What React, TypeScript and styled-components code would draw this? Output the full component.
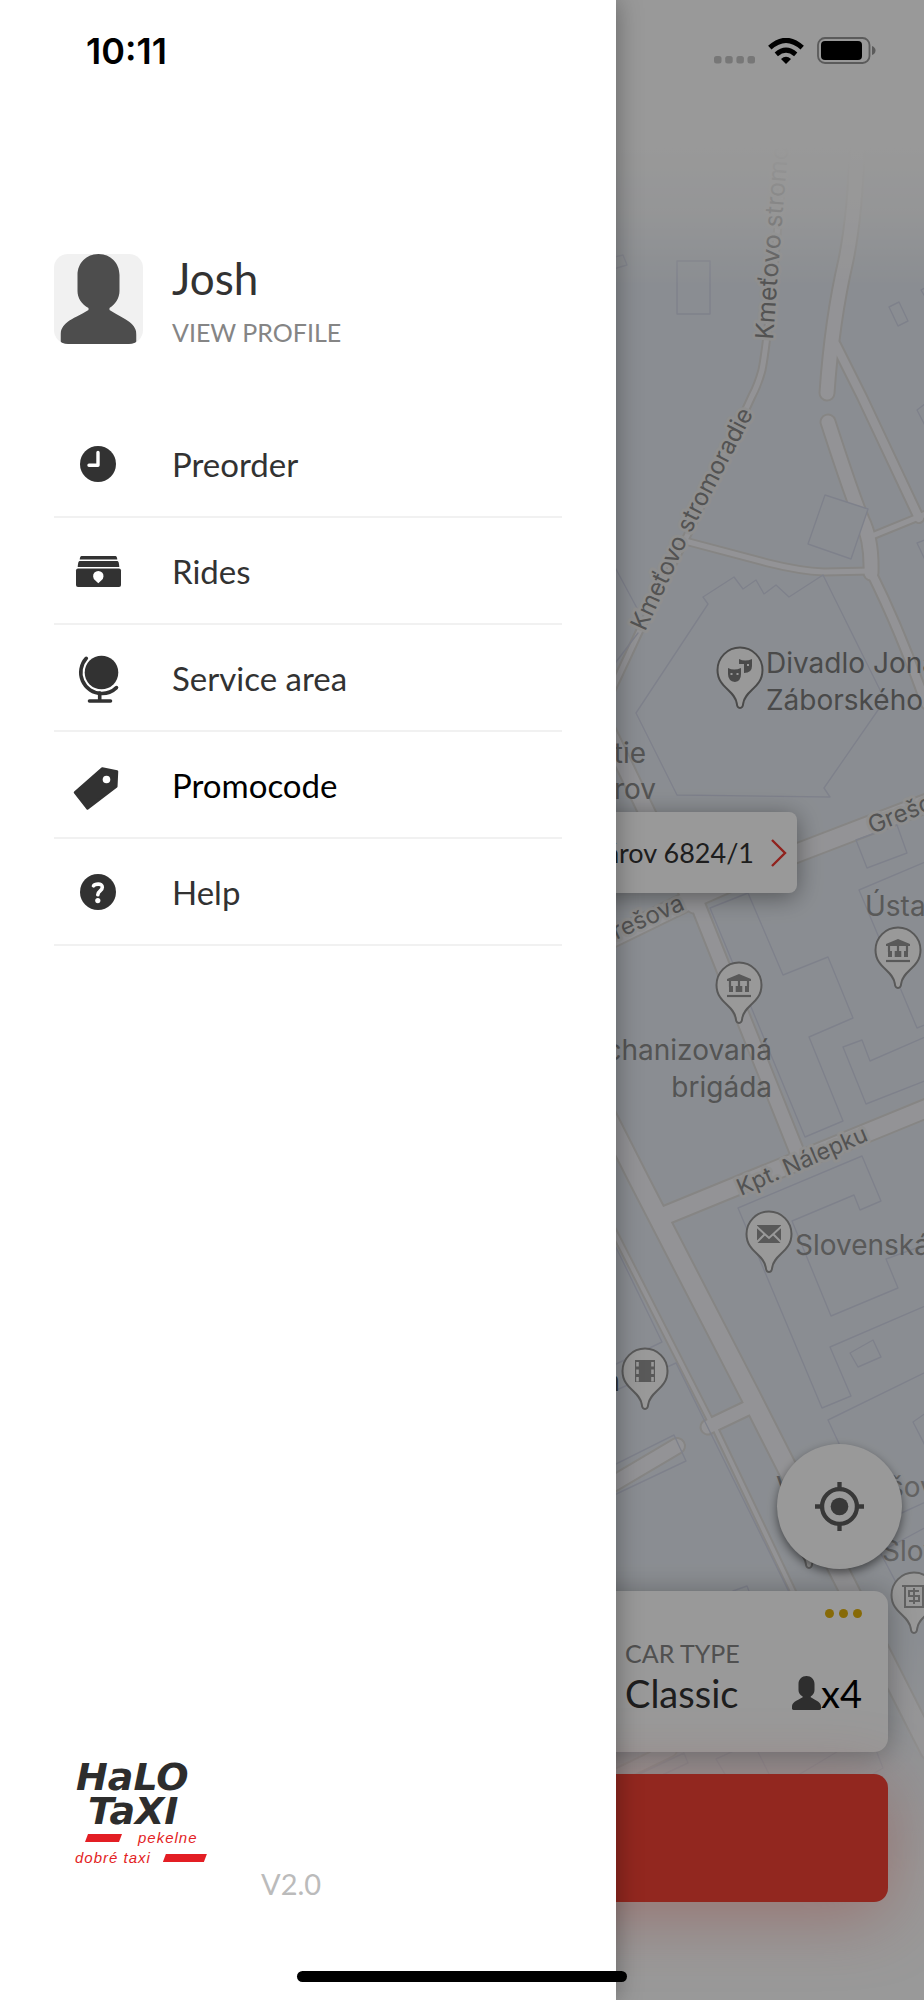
import React from "react";
import styled, { createGlobalStyle } from "styled-components";

const sans = `Lato, "Liberation Sans", sans-serif`;
const system = `Inter, "Liberation Sans", sans-serif`;

const GlobalStyle = createGlobalStyle`
  * { box-sizing: border-box; }
  body { margin: 0; background: #fff; font-family: ${sans}; color: #323232; }
  button { border: 0; padding: 0; font: inherit; color: inherit; cursor: pointer; }
  a { color: inherit; text-decoration: none; }
  p, h1 { margin: 0; }
`;

const Shell = styled.div`
  position: relative;
  display: flex;
  min-height: 100vh;
  overflow: hidden;
`;

/* ---------- booking screen ---------- */

const Booking = styled.main`
  flex: 1;
  display: flex;
  flex-direction: column;
  justify-content: flex-end;
  gap: 22px;
  padding: 0 36px 98px;
`;

const MapCanvas = styled.svg`
  position: absolute;
  inset: 0;
  width: 100%;
  height: 100%;
`;

const Callout = styled.button`
  position: absolute;
  top: calc(50% - 188px);
  left: 127px;
  right: 127px;
  height: 81px;
  padding: 0 10px 0 24px;
  display: flex;
  align-items: center;
  justify-content: flex-end;
  gap: 17px;
  border-radius: 8px;
  background: #fff;
  box-shadow: 0 4px 24px rgba(0, 0, 0, 0.4);
  font-size: 27px;
  line-height: 32px;
`;

const LocateButton = styled.button`
  position: relative;
  align-self: flex-end;
  display: grid;
  place-items: center;
  width: 125px;
  height: 125px;
  margin-right: -14px;
  border-radius: 50%;
  background: #fff;
  box-shadow: 0 4px 10px rgba(0, 0, 0, 0.5);
`;

const RideCard = styled.section`
  position: relative;
  display: flex;
  justify-content: flex-end;
  height: 161px;
  padding: 18px 26px 20px;
  border-radius: 14px;
  background: #fff;
  box-shadow: 0 2px 28px rgba(0, 0, 0, 0.3);
`;

const CarType = styled.div`
  width: 237px;
  display: flex;
  flex-direction: column;
`;

const MoreButton = styled.button`
  align-self: flex-end;
  display: flex;
  gap: 5px;
  background: none;
`;

const MoreDot = styled.i`
  width: 9px;
  height: 9px;
  border-radius: 50%;
  background: #e2b10c;
`;

const CardLabel = styled.p`
  margin-top: 19px;
  font-size: 25px;
  line-height: 32px;
  color: #858585;
`;

const CarRow = styled.div`
  display: flex;
  justify-content: space-between;
  align-items: center;
  font-size: 38px;
  line-height: 48px;
`;

const Seats = styled.span`
  display: flex;
  align-items: center;
  color: #000;
`;

const OrderButton = styled.button`
  position: relative;
  height: 128px;
  border-radius: 14px;
  background: #f34135;
  box-shadow: 0 12px 70px rgba(243, 65, 53, 0.35);
`;

const Scrim = styled.div`
  position: absolute;
  inset: 0;
  background: rgba(0, 0, 0, 0.4);
`;

/* ---------- drawer ---------- */

const Drawer = styled.aside`
  position: absolute;
  top: 0;
  bottom: 0;
  left: 0;
  width: 66.667%;
  display: flex;
  flex-direction: column;
  padding: 254px 54px 98px;
  background: #fff;
  box-shadow: 0 0 24px rgba(0, 0, 0, 0.35);
`;

const Profile = styled.a`
  display: flex;
  gap: 29px;
  height: 90px;
  margin-bottom: 67px;
`;

const Avatar = styled.span`
  width: 89px;
  height: 90px;
  border-radius: 14px;
  background: #f1f1f1;
  overflow: hidden;
`;

const ProfileText = styled.span`
  display: flex;
  flex-direction: column;
`;

const Name = styled.span`
  font-size: 44px;
  line-height: 48px;
`;

const ProfileLink = styled.span`
  margin-top: 14px;
  font-size: 25px;
  line-height: 32px;
  color: #858585;
`;

const MenuItem = styled.a<{ $active?: boolean }>`
  display: flex;
  align-items: center;
  gap: 50px;
  height: 107px;
  padding-left: 20px;
  border-bottom: 2px solid #f1f1f1;
  font-size: 33px;
  line-height: 40px;
  color: ${(p) => (p.$active ? "#000" : "#323232")};
`;

const MenuIcon = styled.svg`
  flex: none;
  width: 48px;
  height: 48px;
  overflow: visible;
  color: #323232;
`;

const DrawerFooter = styled.footer`
  margin-top: auto;
  display: flex;
  align-items: flex-end;
  gap: 47px;
`;

const Brand = styled.div`
  width: 160px;
  padding-bottom: 34px;
  color: #2d2d2d;
`;

const BrandLine = styled.div<{ $indent: number }>`
  padding-left: ${(p) => p.$indent}px;
  font: italic 700 38px/34px "DejaVu Sans", sans-serif;
  white-space: nowrap;
`;

const Tagline = styled.div<{ $indent: number; $gap: number }>`
  display: flex;
  align-items: center;
  gap: ${(p) => p.$gap}px;
  padding-left: ${(p) => p.$indent}px;
  font: italic 15px/20px "Liberation Sans", sans-serif;
  letter-spacing: 1px;
  white-space: nowrap;
  color: #e31e24;
`;

const Stripe = styled.i<{ $width: number }>`
  flex: none;
  width: ${(p) => p.$width}px;
  height: 8px;
  background: #e31e24;
  clip-path: polygon(3px 0, 100% 0, calc(100% - 3px) 100%, 0 100%);
`;

const Version = styled.span`
  font-size: 29px;
  line-height: 36px;
  color: #bbb;
`;

/* ---------- system chrome ---------- */

const StatusBar = styled.header`
  position: absolute;
  top: 0;
  left: 0;
  right: 0;
  display: flex;
  align-items: center;
  justify-content: space-between;
  height: 101px;
  padding: 0 48px 0 86px;
  font: 600 36px/40px ${system};
  color: #000;
`;

const StatusIcons = styled.span`
  display: flex;
  align-items: center;
  gap: 13px;
`;

const HomeIndicator = styled.div`
  position: absolute;
  left: 50%;
  bottom: 18px;
  width: 330px;
  height: 11px;
  border-radius: 6px;
  background: #000;
  transform: translateX(-50%);
`;

/* ---------- drawings ---------- */

const Person = ({ width, height, color }: { width: number; height: number; color: string }) => (
  <svg width={width} height={height} viewBox="0 0 76 90" preserveAspectRatio="none" fill={color} aria-hidden="true">
    <path d="M38 0c12 0 21 9 21 21v16c0 7-4 13-10 17v2c8 5 15 8 20 12 5 4 7 8 7 13v6c0 2-2 3-4 3H4c-2 0-4-1-4-3v-6c0-5 2-9 7-13 5-4 13-7 21-12v-2c-7-4-11-10-11-17V21C17 9 26 0 38 0Z" />
  </svg>
);

const icons = {
  clock: (
    <>
      <circle cx="24" cy="24" r="18" fill="currentColor" />
      <path d="M24 12.500v12.800H15" fill="none" stroke="#fff" strokeWidth="3.400" strokeLinecap="round" strokeLinejoin="round" />
    </>
  ),
  rides: (
    <g fill="currentColor">
      <path d="M7.500 9h34q1.500 0 1.800 3.500h-37.600q.3-3.500 1.800-3.500Z" />
      <path d="M5.500 14h38q1.500 0 1.800 6h-41.600q.3-6 1.800-6Z" />
      <rect x="2" y="21.500" width="45" height="18.500" rx="2" />
      <path d="M24.300 36.200l-3.200-3a5.200 5.200 0 1 1 6.400 0Z" fill="#fff" />
    </g>
  ),
  globe: (
    <>
      <circle cx="27.500" cy="18.500" r="16.800" fill="currentColor" />
      <path d="M12.300 4.300A21 21 0 0 0 27.500 39.500 21 21 0 0 0 42.500 33.600" fill="none" stroke="currentColor" strokeWidth="3.600" strokeLinecap="round" />
      <path d="M25.700 39v8M15.500 47h21" stroke="currentColor" strokeWidth="3.600" strokeLinecap="round" />
    </>
  ),
  tag: (
    <>
      <path d="M28.300 7.500L43 10.500 42.300 25.500 13.500 47.500 1 31.500Z" fill="currentColor" stroke="currentColor" strokeWidth="2.500" strokeLinejoin="round" />
      <circle cx="32.500" cy="18.500" r="3.800" fill="#fff" />
    </>
  ),
  help: (
    <>
      <circle cx="24" cy="24" r="18" fill="currentColor" />
      <path d="M19.500 17.800c1-1.700 8.800-3.200 8.800 1.400 0 3.800-4.300 3.600-4.500 7.600" fill="none" stroke="#fff" strokeWidth="3.600" strokeLinecap="round" />
      <circle cx="23.800" cy="32.600" r="2.600" fill="#fff" />
    </>
  ),
};

const menu: { label: string; icon: keyof typeof icons; active?: boolean }[] = [
  { label: "Preorder", icon: "clock" },
  { label: "Rides", icon: "rides" },
  { label: "Service area", icon: "globe" },
  { label: "Promocode", icon: "tag", active: true },
  { label: "Help", icon: "help" },
];

const roads: [string, number][] = [
  ["M785 150C775 250 770 330 762 370Q758 385 752 396L690 530 640 630 612 690", 5],
  ["M857 150Q855 215 846 260 832 320 827 393", 13],
  ["M828 422Q850 490 862 520 872 540 871 573", 13],
  ["M871 572Q900 630 926 704", 8],
  ["M836 345L862 397 919 518", 8],
  ["M872 536L926 514", 5],
  ["M685 541L768 563Q800 571 824 572L871 571", 5],
  ["M600 715L665 850 694 905", 15],
  ["M696 900L740 1010 797 1152", 13],
  ["M600 944L690 900 797 853 930 802", 17],
  ["M666 1215L930 1107", 17],
  ["M600 1103L639 1180 750 1395 930 1750", 18],
  ["M606 1216L660 1322 712 1424", 4],
  ["M716 1430L797 1600", 4],
  ["M708 1427L752 1406", 13],
  ["M606 1488L677 1446", 14],
  ["M600 1784L670 1750", 12],
];

const buildings = [
  "M825 495L868 509 851 559 808 544Z",
  "M734 577L743 589 756 580 764 594 776 585 789 597 823 575 885 700 824 788 830 797 677 795 636 713 708 604 703 597Z",
  "M610 558L638 610M638 633L610 670",
  "M677 261H710V314H677Z",
  "M889 307L899 302 908 321 898 326Z",
  "M610 258L623 255 627 265 610 270",
  "M930 400L917 410 930 435M930 538L917 543 930 570M930 285L921 290 930 305",
  "M710 908L748 893 783 975 828 957 853 1018 809 1037 843 1121 805 1137Z",
  "M856 840L897 825 907 853 867 868Z",
  "M930 860L859 890 917 1028 930 1023",
  "M930 1035L870 1061 862 1040 843 1047 866 1104 930 1079",
  "M930 1243L886 1259 898 1288 831 1316 792 1221 854 1195 860 1210 881 1201 862 1156 738 1208 822 1408 851 1396 830 1347 930 1304",
  "M850 1353L873 1340 881 1357 858 1367Z",
  "M930 1370L828 1420 842 1450M930 1410L913 1422 930 1455",
  "M610 1235L662 1342 610 1367M610 1393L676 1363 790 1594",
  "M610 1467L674 1435 686 1461 610 1497",
  "M930 1500L895 1516M930 1525L880 1552 900 1590M733 1591L747 1586 750 1594",
  "M635 1776L684 1753 688 1763 660 1776M726 1776L716 1759 740 1748M757 1750L770 1776M800 1774L840 1750M873 1774L883 1768 874 1745",
];

const glyphs: Record<string, React.ReactNode> = {
  masks: (
    <>
      <path d="M-1-11q6 3 13 0v7q0 7-8 7V-6h-5Z" />
      <path d="M-12-2q6 3 13 0v6q0 7-6 8-7-1-7-8Z" />
      <path d="M-9.500 4h2M-3.500 4h2M7-5h2" stroke="#fff" strokeWidth="2" />
    </>
  ),
  museum: (
    <>
      <path d="M0-11L12-6v2H-12v-2Z" />
      <path d="M-9-5V2M0-5V2M9-5V2" stroke="currentColor" strokeWidth="2.200" />
      <path d="M-10 1h4v6h-4ZM-3.300 1h6.600v6h-6.600ZM6 1h4v6h-4Z" />
      <path d="M-12 11H12" stroke="currentColor" strokeWidth="2.200" />
    </>
  ),
  mail: (
    <>
      <path d="M-12-9H12V9H-12Z" />
      <path d="M-13-8L0 4 13-8M-13 9L-4 0M13 9L4 0" fill="none" stroke="#fff" strokeWidth="2" />
    </>
  ),
  film: (
    <>
      <path d="M-10-11H10V11H-10Z" />
      <path d="M-7.500-9V11M7.500-9V11" stroke="#fff" strokeWidth="2.600" strokeDasharray="4.500 3" />
    </>
  ),
  bank: (
    <g fill="none" stroke="currentColor" strokeWidth="2">
      <path d="M-12-9H12M-9-9V12H9V-9" />
      <path d="M5-4H-5V1H5V6H-5M0-7V9" />
    </g>
  ),
  none: null,
};

const pins: [number, number, string, string][] = [
  [740, 670, "masks", "#7c7c7c"],
  [739, 985, "museum", "#949494"],
  [898, 950, "museum", "#949494"],
  [769, 1234, "mail", "#949494"],
  [645, 1371, "film", "#949494"],
  [914, 1595, "bank", "#a4a4a4"],
  [809, 1530, "none", "#a4a4a4"],
];

const places: [number, number, string, string, ("start" | "end")?][] = [
  [646, 763, "tie", "#8c8c8c", "end"],
  [656, 799, "rov", "#8c8c8c", "end"],
  [766, 673, "Divadlo Jonáša", "#7c7c7c"],
  [766, 710, "Záborského", "#7c7c7c"],
  [865, 916, "Ústav", "#949494"],
  [772, 1060, "chanizovaná", "#8c8c8c", "end"],
  [772, 1097, "brigáda", "#8c8c8c", "end"],
  [795, 1255, "Slovenská", "#949494"],
  [882, 1561, "Slovenská", "#a4a4a4"],
  [620, 1391, "a", "#555", "end"],
  [776, 1497, "V", "#949494"],
  [889, 1497, "šov", "#a4a4a4"],
];

const streets: [string, string, string, number][] = [
  ["kmet-upper", "M773 340Q780 240 790 130L794 60", "Kmeťovo stromoradie", 25],
  ["kmet-lower", "M645 632L690 535 776 370", "Kmeťovo stromoradie", 24],
  ["gresova-west", "M600 947L722 893", "Grešova", 24],
  ["gresova-east", "M872 834L1000 783", "Grešova", 24],
  ["nalepku", "M741 1196L920 1118", "Kpt. Nálepku", 23],
];

const CityMap = () => (
  <MapCanvas viewBox="0 0 924 2000" preserveAspectRatio="xMaxYMid slice" role="img" aria-label="Map">
    <defs>
      <linearGradient id="fade-top" x1="0" y1="0" x2="0" y2="1">
        <stop offset="0" stopColor="#fff" />
        <stop offset="0.52" stopColor="#fff" />
        <stop offset="0.75" stopColor="#fff" stopOpacity="0.7" />
        <stop offset="1" stopColor="#fff" stopOpacity="0" />
      </linearGradient>
      <linearGradient id="fade-bottom" x1="0" y1="0" x2="0" y2="1">
        <stop offset="0" stopColor="#fff" stopOpacity="0" />
        <stop offset="0.65" stopColor="#fff" />
      </linearGradient>
      {streets.map(([id, d]) => (
        <path key={id} id={id} d={d} />
      ))}
    </defs>
    <rect width="924" height="2000" fill="#e7ecf3" />
    <g fill="none" strokeLinejoin="round" strokeLinecap="round">
      {roads.map(([d, w]) => (
        <path key={d} d={d} stroke="#dfdedc" strokeWidth={w + 4} />
      ))}
      {roads.map(([d, w]) => (
        <path key={d} d={d} stroke="#f6f6fa" strokeWidth={w} />
      ))}
      {buildings.map((d, i) => (
        <path key={d} d={d} fill={i === 0 ? "#e7ecf3" : "none"} stroke="#d3d7e8" strokeWidth="1.400" />
      ))}
    </g>
    <g fontFamily={system} fill="#8a8a8a" stroke="#eeeeee" strokeWidth="6" strokeLinejoin="round" paintOrder="stroke">
      {streets.map(([id, , name, size]) => (
        <text key={id} fontSize={size}>
          <textPath href={`#${id}`}>{name}</textPath>
        </text>
      ))}
    </g>
    <g fontFamily={system} fontSize="28">
      {places.map(([x, y, name, color, anchor]) => (
        <text key={`${x}-${y}`} x={x} y={y} fill={color} textAnchor={anchor ?? "start"}>
          {name}
        </text>
      ))}
    </g>
    {pins.map(([x, y, glyph, color]) => (
      <g key={`${x}-${y}`} transform={`translate(${x} ${y})`} color={color} fill="currentColor">
        <path
          d="M0 38c-2.500 0-3-2-3.200-4.500C-5 20-22.500 18-22.500 0a22.500 22.500 0 0 1 45 0C22.500 18 5 20 3.200 33.500 3 36 2.500 38 0 38Z"
          fill="#fff"
          stroke="currentColor"
          strokeWidth="2"
        />
        {glyphs[glyph]}
      </g>
    ))}
    <rect width="924" height="285" fill="url(#fade-top)" />
    <rect y="1640" width="924" height="360" fill="url(#fade-bottom)" />
  </MapCanvas>
);

export default function App() {
  return (
    <Shell>
      <GlobalStyle />
      <Booking>
        <CityMap />
        <Callout>
          árov 6824/1
          <svg width="16" height="28" viewBox="0 0 16 28" fill="none" stroke="#f03a32" strokeWidth="2.400" aria-hidden="true">
            <path d="M1 1L14 14 1 27" />
          </svg>
        </Callout>
        <LocateButton aria-label="My location">
          <svg width="49" height="49" viewBox="0 0 50 50" fill="none" stroke="#5e5e5e" strokeWidth="4.400" aria-hidden="true">
            <circle cx="25" cy="25" r="17.800" />
            <circle cx="25" cy="25" r="9" fill="#5e5e5e" stroke="none" />
            <path d="M25 0v8M25 42v8M0 25h8M42 25h8" />
          </svg>
        </LocateButton>
        <RideCard>
          <CarType>
            <MoreButton aria-label="More car types">
              <MoreDot />
              <MoreDot />
              <MoreDot />
            </MoreButton>
            <CardLabel>CAR TYPE</CardLabel>
            <CarRow>
              Classic
              <Seats>
                <Person width={29} height={34} color="#4e4e4e" />
                x4
              </Seats>
            </CarRow>
          </CarType>
        </RideCard>
        <OrderButton aria-label="Order" />
      </Booking>
      <Scrim />
      <Drawer>
        <Profile href="#profile">
          <Avatar>
            <svg width="89" height="90" viewBox="0 0 89 90" aria-hidden="true">
              <g transform="translate(6.500 0)">
                <Person width={76} height={90} color="#4d4d4d" />
              </g>
            </svg>
          </Avatar>
          <ProfileText>
            <Name>Josh</Name>
            <ProfileLink>VIEW PROFILE</ProfileLink>
          </ProfileText>
        </Profile>
        <nav>
          {menu.map(({ label, icon, active }) => (
            <MenuItem key={label} href={`#${icon}`} $active={active}>
              <MenuIcon viewBox="0 0 48 48" aria-hidden="true">
                {icons[icon]}
              </MenuIcon>
              {label}
            </MenuItem>
          ))}
        </nav>
        <DrawerFooter>
          <Brand>
            <BrandLine $indent={22}>HaLO</BrandLine>
            <BrandLine $indent={34}>TaXI</BrandLine>
            <Tagline $indent={31} $gap={16}>
              <Stripe $width={37} />
              pekelne
            </Tagline>
            <Tagline $indent={21} $gap={12}>
              dobré taxi
              <Stripe $width={44} />
            </Tagline>
          </Brand>
          <Version>V2.0</Version>
        </DrawerFooter>
      </Drawer>
      <StatusBar>
        <time>10:11</time>
        <StatusIcons>
          <svg width="41" height="26" viewBox="0 0 41 26" fill="#777" aria-label="No signal">
            <rect y="18" width="7.500" height="7.500" rx="2.500" />
            <rect x="11.200" y="18" width="7.500" height="7.500" rx="2.500" />
            <rect x="22.400" y="18" width="7.500" height="7.500" rx="2.500" />
            <rect x="33.500" y="18" width="7.500" height="7.500" rx="2.500" />
          </svg>
          <svg width="36" height="26" viewBox="0 0 36 26" aria-label="Wi-Fi">
            <path d="M1.800 9.700Q18-5 34.200 9.700" fill="none" stroke="#000" strokeWidth="5" />
            <path d="M8.300 16.300Q18 8 27.700 16.300" fill="none" stroke="#000" strokeWidth="5" />
            <path d="M13 21Q18 16.500 23 21L18 26Z" />
          </svg>
          <svg width="59" height="27" viewBox="0 0 59 27" aria-label="Battery full">
            <rect x="1" y="1" width="51.500" height="25" rx="7" fill="none" stroke="#5b5b5b" strokeWidth="1.800" />
            <rect x="4" y="4" width="41" height="19" rx="4" />
            <path d="M55 9q3.500 1.500 3.500 4.500T55 18Z" fill="#5b5b5b" />
          </svg>
        </StatusIcons>
      </StatusBar>
      <HomeIndicator />
    </Shell>
  );
}
